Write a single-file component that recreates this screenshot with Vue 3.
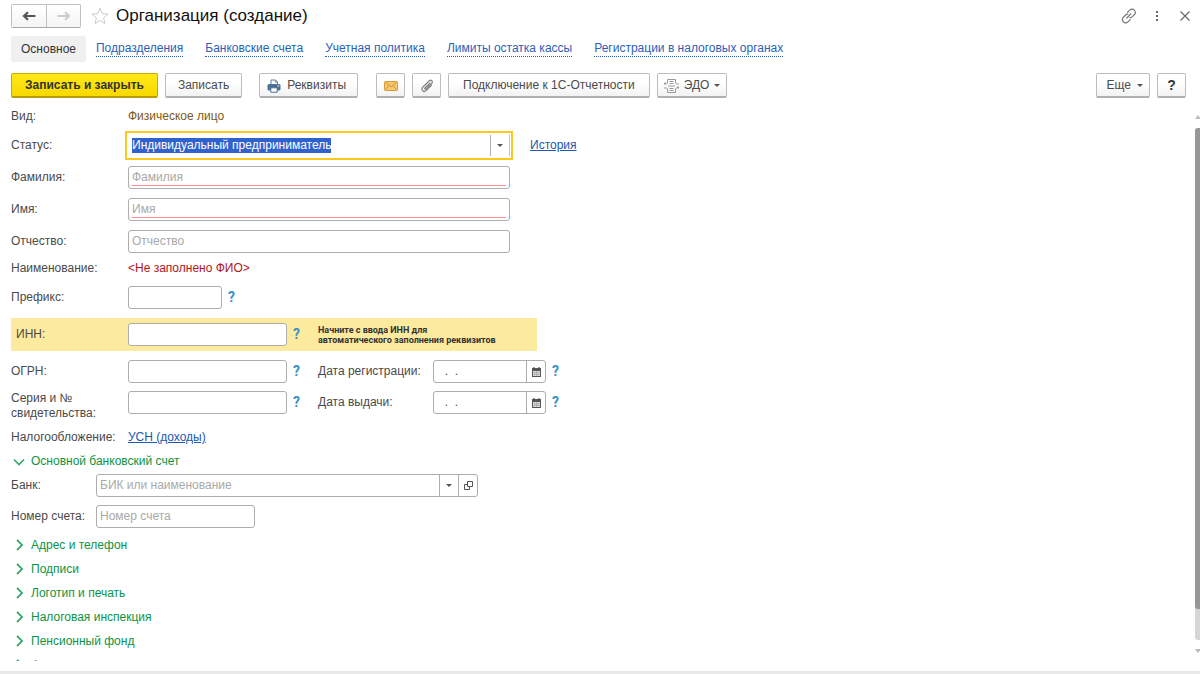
<script setup>
import { onMounted, ref } from 'vue'

const tabs = [
  'Подразделения',
  'Банковские счета',
  'Учетная политика',
  'Лимиты остатка кассы',
  'Регистрации в налоговых органах',
]

const nameFields = [
  { id: 'surname', label: 'Фамилия', required: true },
  { id: 'name', label: 'Имя', required: true },
  { id: 'patronymic', label: 'Отчество', required: false },
]

const codeRows = [
  { id: 'ogrn', label: 'ОГРН:', dateId: 'reg-date', dateLabel: 'Дата регистрации:' },
  { id: 'series', label: 'Серия и № свидетельства:', twoLine: true, dateId: 'issue-date', dateLabel: 'Дата выдачи:' },
]

const sections = [
  'Адрес и телефон',
  'Подписи',
  'Логотип и печать',
  'Налоговая инспекция',
  'Пенсионный фонд',
  'Фонд социального страхования',
]

const status = ref('Индивидуальный предприниматель')
const statusInput = ref(null)

onMounted(() => {
  statusInput.value.focus()
  statusInput.value.select()
})
</script>

<template>
  <div class="window">
    <header class="titlebar">
      <div class="history">
        <button type="button" aria-label="Назад">
          <svg width="14" height="10" viewBox="0 0 14 10"><path d="M13.500 5H3M6 1.200 2 5l4 3.800" fill="none" stroke="#555" stroke-width="2.200" /></svg>
        </button>
        <button type="button" aria-label="Вперед">
          <svg width="14" height="10" viewBox="0 0 14 10"><path d="M.5 5H11M8 1.200 12 5 8 8.800" fill="none" stroke="#ccc" stroke-width="2" /></svg>
        </button>
      </div>
      <button type="button" class="plain star" aria-label="В избранное">
        <svg width="18" height="18" viewBox="0 0 18 18"><path d="M9 1.200 11.200 6.600 17 7.100 12.600 10.800 14 16.600 9 13.400 4 16.600 5.400 10.800 1 7.100 6.800 6.600Z" fill="#fff" stroke="#ccc" stroke-width="1" /></svg>
      </button>
      <h1>Организация (создание)</h1>
      <div class="window-tools">
        <button type="button" class="plain" aria-label="Ссылка">
          <svg width="16" height="16" viewBox="0 0 16 16" fill="none" stroke="#777" stroke-width="1.200" stroke-linecap="round">
            <path d="M6.500 4.300 8.700 2.100a3.100 3.100 0 0 1 4.600 0 3.100 3.100 0 0 1 0 4.600l-2.200 2.200a3 3 0 0 1-2.200.8" />
            <path d="M9.200 11.600 7 13.800a3.100 3.100 0 0 1-4.600 0 3.100 3.100 0 0 1 0-4.600l2.200-2.200a3 3 0 0 1 2.200-.8" />
            <path d="M5.800 10 9.900 5.900" />
          </svg>
        </button>
        <button type="button" class="plain" aria-label="Меню">
          <svg width="16" height="16" viewBox="0 0 16 16" fill="#666"><rect x="7" y="3" width="2" height="2" /><rect x="7" y="7" width="2" height="2" /><rect x="7" y="11" width="2" height="2" /></svg>
        </button>
        <button type="button" class="plain" aria-label="Закрыть">
          <svg width="16" height="16" viewBox="0 0 16 16"><path d="m3.500 3.500 9 9m0-9-9 9" stroke="#666" stroke-width="1.100" /></svg>
        </button>
      </div>
    </header>

    <nav class="tabs">
      <span class="current">Основное</span>
      <a v-for="tab in tabs" :key="tab" href="#">{{ tab }}</a>
    </nav>

    <div class="toolbar">
      <button type="button" class="btn primary">Записать и закрыть</button>
      <button type="button" class="btn">Записать</button>
      <button type="button" class="btn print">
        <svg width="14" height="14" viewBox="0 0 14 14">
          <path d="M4 6V1h4.600L10.500 3v3" fill="#fff" stroke="#5b7f9f" />
          <path d="M8.300 1v2.200h2.200" fill="none" stroke="#5b7f9f" stroke-width=".8" />
          <rect x=".5" y="5" width="13" height="6.500" rx="1.500" fill="#4a7195" />
          <rect x="10.500" y="6.400" width="1.600" height="1" fill="#fff" />
          <path d="M3.800 8.800h6.400v4.400H3.800z" fill="#fff" stroke="#4a7195" />
        </svg>
        Реквизиты
      </button>
      <button type="button" class="btn icon" aria-label="Письмо">
        <svg width="14" height="10" viewBox="0 0 14 10"><rect x=".5" y=".5" width="13" height="9" rx="1" fill="#f4c870" stroke="#d9993a" /><path d="m1.200 1.200 5.800 4.600 5.800-4.600M1.200 8.800 5.200 4.600M12.800 8.800 8.800 4.600" fill="none" stroke="#cf8b2d" stroke-width=".9" /></svg>
      </button>
      <button type="button" class="btn icon" aria-label="Файлы">
        <svg width="14" height="14" viewBox="0 0 14 14"><path d="M9.800 4.200 5.200 8.800c-1 1-.1 2 .9 1.100L11.600 4.500c1.900-2-.6-4.400-2.600-2.500L3 8c-2.600 2.700.7 6 3.400 3.400l5-5" fill="none" stroke="#888" stroke-width="1.300" stroke-linecap="round" /></svg>
      </button>
      <button type="button" class="btn reporting">Подключение к 1С-Отчетности</button>
      <button type="button" class="btn edo">
        <svg width="15" height="14" viewBox="0 0 15 14" fill="none" stroke="#999">
          <path d="M3.500 4.500v-4h8v4M3.500 9.500v4h8v-4" />
          <path d="M5.500 2.500h4M5.500 4.500h4M4 7h7M5.500 9.500h4M5.500 11.500h4" />
          <path d="M0 5h3M1.500 3.500 0 5M0 9h3M12 5h3M12 9h3M13.500 7.500 15 9" stroke-width="1.200" />
        </svg>
        ЭДО <i class="caret"></i>
      </button>
      <span class="spacer"></span>
      <button type="button" class="btn more">Еще <i class="caret"></i></button>
      <button type="button" class="btn icon help-main" aria-label="Справка">?</button>
    </div>

    <div class="body">
      <form class="form" @submit.prevent>
        <div class="row text">
          <span class="label">Вид:</span>
          <span class="kind">Физическое лицо</span>
        </div>

        <div class="row person">
          <label class="label" for="status">Статус:</label>
          <div class="field wide active">
            <input id="status" ref="statusInput" v-model="status" type="text" spellcheck="false" />
            <button type="button" aria-label="Выбрать статус"><i class="caret"></i></button>
          </div>
          <a class="link after" href="#">История</a>
        </div>

        <div v-for="f in nameFields" :key="f.id" class="row person">
          <label class="label" :for="f.id">{{ f.label }}:</label>
          <div class="field wide" :class="{ required: f.required }">
            <input :id="f.id" type="text" :placeholder="f.label" />
          </div>
        </div>

        <div class="row text full-name">
          <span class="label">Наименование:</span>
          <span class="error">&lt;Не заполнено ФИО&gt;</span>
        </div>

        <div class="row">
          <label class="label" for="prefix">Префикс:</label>
          <div class="field short"><input id="prefix" type="text" /></div>
          <button type="button" class="plain hint" aria-label="Подсказка">?</button>
        </div>

        <div class="row inn">
          <label class="label" for="inn">ИНН:</label>
          <div class="field code"><input id="inn" type="text" /></div>
          <button type="button" class="plain hint" aria-label="Подсказка">?</button>
          <strong class="tip">Начните с ввода ИНН для<br />автоматического заполнения реквизитов</strong>
        </div>

        <div v-for="r in codeRows" :key="r.id" class="row">
          <label class="label" :class="{ 'two-line': r.twoLine }" :for="r.id">{{ r.label }}</label>
          <div class="field code"><input :id="r.id" type="text" /></div>
          <button type="button" class="plain hint" aria-label="Подсказка">?</button>
          <label class="label date-label" :for="r.dateId">{{ r.dateLabel }}</label>
          <div class="field date">
            <input :id="r.dateId" type="text" value="  .  ." />
            <button type="button" aria-label="Календарь">
              <svg width="9" height="10" viewBox="0 0 9 10"><path d="M0 1h9v9H0z" fill="#555" /><path d="M2 0v2M7 0v2" stroke="#555" stroke-width="1.200" /><path d="M1 4h7v5H1z" fill="#eee" /><path d="M1 5.700h7M1 7.400h7M2.800 4v5M4.500 4v5M6.200 4v5" stroke="#888" stroke-width=".5" /></svg>
            </button>
          </div>
          <button type="button" class="plain hint" aria-label="Подсказка">?</button>
        </div>

        <div class="row text tax">
          <span class="label">Налогообложение:</span>
          <a class="link" href="#">УСН (доходы)</a>
        </div>

        <button type="button" class="plain section open">
          <svg width="12" height="12" viewBox="0 0 12 12"><path d="m1 3.500 5 5 5-5" fill="none" stroke="#2fa866" stroke-width="1.600" /></svg>
          Основной банковский счет
        </button>

        <div class="row bank">
          <label class="label" for="bank">Банк:</label>
          <div class="field wide">
            <input id="bank" type="text" placeholder="БИК или наименование" />
            <button type="button" aria-label="Выбрать банк"><i class="caret"></i></button>
            <button type="button" aria-label="Открыть банк">
              <svg width="9" height="9" viewBox="0 0 9 9" fill="none" stroke="#555"><path d="M3.500.5h5v5h-5z" /><path d="M3.500 3.500h-3v5h5v-3" /></svg>
            </button>
          </div>
        </div>

        <div class="row bank">
          <label class="label" for="account">Номер счета:</label>
          <div class="field code"><input id="account" type="text" placeholder="Номер счета" /></div>
        </div>

        <button v-for="s in sections" :key="s" type="button" class="plain section">
          <svg width="12" height="12" viewBox="0 0 12 12"><path d="m4 .8 5 5.200-5 5.200" fill="none" stroke="#2fa866" stroke-width="1.800" /></svg>
          {{ s }}
        </button>
      </form>

      <div class="scroll">
        <i class="arrow up"></i>
        <div class="track"><div class="thumb"></div></div>
        <i class="arrow down"></i>
      </div>
    </div>
  </div>
</template>

<style>
body {
  background: #fff;
}
</style>

<style scoped>
.window {
  box-sizing: border-box;
  display: flex;
  flex-direction: column;
  height: 100vh;
  border-bottom: 3px solid #e8e8e8;
  padding-bottom: 10px;
  overflow: hidden;
  font: 12px/15px "Liberation Sans", Arial, sans-serif;
  color: #4a4a4a;
}
button,
input {
  box-sizing: border-box;
  margin: 0;
  font: inherit;
  color: inherit;
}
.plain {
  border: 0;
  padding: 0;
  background: none;
}
svg {
  display: block;
  flex: none;
}

.titlebar {
  display: flex;
  align-items: center;
  height: 32px;
  padding: 0 7px 0 11px;
  flex: none;
}
.history {
  display: flex;
  border: 1px solid #c0c0c0;
  border-bottom-color: #a8a8a8;
  border-radius: 2px;
}
.history button {
  display: flex;
  align-items: center;
  justify-content: center;
  width: 34px;
  height: 22px;
  padding: 0;
  border: 0;
  background: linear-gradient(#fff, #f4f4f4);
}
.history button + button {
  border-left: 1px solid #c0c0c0;
}
.star {
  margin-left: 10px;
}
h1 {
  margin: 0 0 0 7px;
  font-size: 17px;
  line-height: 20px;
  font-weight: 400;
  color: #111;
}
.window-tools {
  display: flex;
  gap: 12px;
  margin-left: auto;
}

.tabs {
  display: flex;
  align-items: center;
  gap: 22px;
  height: 26px;
  margin-top: 4px;
  padding: 0 11px;
  flex: none;
}
.tabs .current {
  padding: 6px 10px 5px;
  margin-right: -12px;
  border-radius: 3px;
  background: #f0f0f0;
  color: #333;
}
.tabs a {
  color: #2b5fb8;
  text-decoration: none;
  border-bottom: 1px dotted #2b5fb8;
}

.toolbar {
  display: flex;
  gap: 7px;
  margin-top: 11px;
  padding: 0 14px 0 11px;
  flex: none;
}
.btn {
  display: flex;
  align-items: center;
  justify-content: center;
  gap: 6px;
  height: 25px;
  padding: 1px 12px 0;
  border: 1px solid #bdbdbd;
  border-bottom: 2px solid #b0b0b0;
  border-radius: 2px;
  background: linear-gradient(#fff 40%, #f2f2f2);
  white-space: nowrap;
}
.primary {
  padding: 1px 13px 0;
  border-color: #c9ab00;
  border-bottom-color: #b89c00;
  background: linear-gradient(#ffe817, #f8d800);
  font-weight: 700;
  color: #333;
}
.print {
  margin: 0 11px 0 10px;
  padding: 1px 11px 0 7px;
}
.reporting {
  padding: 1px 14px 0;
}
.icon {
  width: 29px;
  padding: 1px 0 0;
}
.edo {
  padding: 1px 6px 0;
  gap: 5px;
}
.more {
  padding: 1px 6px 0 10px;
}
.help-main {
  font-size: 14px;
  font-weight: 700;
  color: #333;
}
.spacer {
  flex: 1;
}
.caret {
  width: 0;
  border: 3px solid transparent;
  border-top-color: #555;
  border-bottom: 0;
}

.body {
  display: flex;
  flex: 1;
  min-height: 0;
  margin-top: 9px;
}
.form {
  flex: 1;
  padding-left: 11px;
  overflow: hidden;
}
.row {
  display: flex;
  align-items: center;
  height: 23px;
  margin-bottom: 8px;
}
.row.text {
  height: 19px;
}
.row.person {
  margin-bottom: 9px;
}
.row.full-name {
  margin-top: -3px;
}
.label {
  width: 117px;
  flex: none;
}
.two-line {
  align-self: flex-start;
}
.kind {
  color: #7a5a14;
}
.error {
  color: #b3151b;
}
.link {
  color: #2157b0;
  text-decoration: underline;
}
.after {
  margin-left: 20px;
}
.field {
  box-sizing: border-box;
  display: flex;
  height: 23px;
  flex: none;
  border: 1px solid #adadad;
  border-radius: 3px;
  background: #fff;
}
.field input {
  flex: 1;
  min-width: 0;
  padding: 0 3px;
  border: 0;
  outline: 0;
  background: none;
}
.field input::placeholder {
  color: #a9a9a9;
  opacity: 1;
}
.field input::selection {
  background: #2f62cc;
  color: #fff;
}
.field button {
  display: flex;
  align-items: center;
  justify-content: center;
  width: 19px;
  padding: 0;
  border: 0;
  border-left: 1px solid #adadad;
  background: none;
}
.wide {
  width: 382px;
}
.short {
  width: 94px;
}
.code {
  width: 159px;
}
.date {
  width: 113px;
}
.date input {
  padding-left: 4px;
}
.field.required {
  padding: 0 3px 2px;
}
.field.required input {
  padding: 2px 0 0;
  border-bottom: 1px solid #ff8f8f;
}
.active {
  border-color: #fff #c4c4c4 #fff #fff;
  border-radius: 0;
  outline: 2px solid #fbc81e;
  outline-offset: 1px;
}
.hint {
  width: 9px;
  margin-left: 5px;
  font: 700 14px/15px Roboto, "Liberation Sans", sans-serif;
  color: #3a92c8;
}
.row.inn {
  width: 526px;
  height: 33px;
  margin: 9px 0;
  background: #fcea9e;
}
.inn .label {
  box-sizing: border-box;
  padding-left: 5px;
}
.tip {
  margin-left: 17px;
  font: 700 9px/10px Roboto, "Liberation Sans", sans-serif;
  color: #333;
}
.date-label {
  width: 115px;
  margin-left: 17px;
}
.row.tax {
  margin: 14px 0 4px;
}
.section {
  display: flex;
  align-items: center;
  gap: 6px;
  height: 24px;
  padding-left: 2px;
  color: #0b9444;
}
.section.open {
  height: 21px;
  margin-bottom: 2px;
}
.bank .label {
  width: 85px;
}
.bank + .section {
  margin-top: -3px;
}

.scroll {
  display: flex;
  flex-direction: column;
  align-items: center;
  width: 5px;
  padding: 8px 0;
}
.track {
  flex: 1;
  width: 5px;
  margin: 9px 0;
  border-radius: 3px 0 0 3px;
  background: #d6d6d6;
}
.thumb {
  height: 94%;
  border-radius: 3px 0 0 3px;
  background: #979797;
}
.arrow {
  border: 3px solid transparent;
}
.up {
  border-top: 0;
  border-bottom: 4px solid #bbb;
}
.down {
  border-bottom: 0;
  border-top: 4px solid #bbb;
}
</style>
